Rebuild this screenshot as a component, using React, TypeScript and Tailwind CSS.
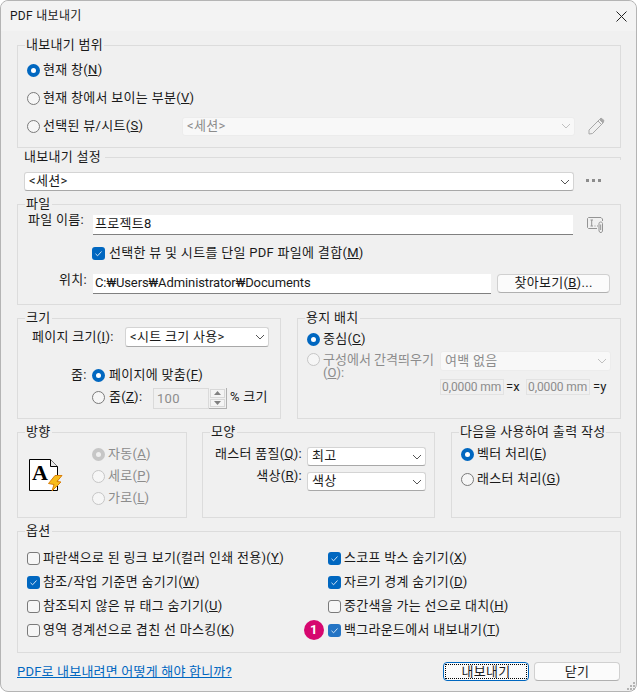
import type { ReactNode } from 'react'

function Group({ title, className, children }: { title: string; className: string; children: ReactNode }) {
  return (
    <div className={`relative border border-[#dcdcdc] ${className}`}>
      <span className="absolute -top-[8px] left-[7px] bg-[#f0f0f0] px-px">{title}</span>
      {children}
    </div>
  )
}

function Radio({ on, disabled }: { on?: boolean; disabled?: boolean }) {
  if (on && disabled) {
    return (
      <span className="flex h-[13px] w-[13px] shrink-0 items-center justify-center rounded-full bg-[#c6c6c6]">
        <span className="h-[5px] w-[5px] rounded-full bg-[#efefef]" />
      </span>
    )
  }
  if (on) {
    return (
      <span className="flex h-[13px] w-[13px] shrink-0 items-center justify-center rounded-full bg-[#0067c0]">
        <span className="h-[5px] w-[5px] rounded-full bg-white" />
      </span>
    )
  }
  return (
    <span
      className={`h-[13px] w-[13px] shrink-0 rounded-full border ${
        disabled ? 'border-[#c6c6c6] bg-[#f6f6f6]' : 'border-[#7a7a7a] bg-[#f6f6f6]'
      }`}
    />
  )
}

function Check({ on, soft }: { on?: boolean; soft?: boolean }) {
  if (!on) return <span className="h-[13px] w-[13px] shrink-0 rounded-[3px] border border-[#7a7a7a] bg-[#f6f6f6]" />
  return (
    <span
      className={`flex h-[13px] w-[13px] shrink-0 items-center justify-center rounded-[3px] ${
        soft ? 'bg-[#2474c4]' : 'bg-[#0067c0]'
      }`}
    >
      <svg width="9" height="9" viewBox="0 0 9 9" fill="none" stroke="#cfe3f5" strokeWidth="1">
        <path d="M1.5 4.8 L3.6 6.8 L7.5 2.5" />
      </svg>
    </span>
  )
}

function Chevron({ disabled }: { disabled?: boolean }) {
  return (
    <svg width="10" height="6" viewBox="0 0 10 6" fill="none" stroke={disabled ? '#c0c0c0' : '#555555'} strokeWidth="1">
      <path d="M1 1 L5 5 L9 1" />
    </svg>
  )
}

function Combo({ text, className, disabled }: { text: string; className: string; disabled?: boolean }) {
  return (
    <div
      className={`flex shrink-0 items-center justify-between rounded-[3px] border pr-[3px] pl-[4px] ${
        disabled
          ? 'border-[#ececec] bg-[#f8f8f8] text-[#8c8c8c]'
          : 'border-[#d4d4d4] border-b-[#a8a8a8] bg-white'
      } ${className}`}
    >
      <span className="-mt-px">{text}</span>
      <Chevron disabled={disabled} />
    </div>
  )
}

function TextInput({ value, className }: { value: string; className: string }) {
  return (
    <div className={`flex h-[20px] shrink-0 items-center border-b border-b-[#808080] bg-white pb-[2px] pl-[2px] ${className}`}>
      {value}
    </div>
  )
}

function PencilIcon() {
  return (
    <svg width="17" height="18" viewBox="0 0 17 18" fill="none" stroke="#a8a8a8" strokeWidth="1">
      <path d="M1 13 L11.5 2.5 L15 6 L4.5 16.5 L1 17 Z" />
      <path d="M11.5 2.5 L13 1 L16 3.5 L15 6" fill="#a8a8a8" />
      <path d="M10 4 L13.5 7.5" />
    </svg>
  )
}

function NameRuleIcon() {
  return (
    <svg width="17" height="16" viewBox="0 0 17 16" fill="none" stroke="#949494" strokeWidth="1">
      <path d="M10 11.5 H1.5 L0.5 10.5 V1.5 L1.5 0.5 H14 L15.5 2 V4" />
      <path d="M3.5 3 H6 M4.7 3 V9 M3.5 9 H6 M7.5 9 H8.5 M10 9 H11" />
      <path d="M12 6.5 C12 4.5 15.5 4.5 15.5 6.5 V14 L14.5 15.5 H13 L12 14 Z" />
      <path d="M13.7 7.5 V13" />
    </svg>
  )
}

function PageIcon() {
  return (
    <svg width="35" height="34" viewBox="0 0 35 34" fill="none">
      <path d="M0.5 0.5 H21.5 L28.5 7.5 V31.5 H0.5 Z" fill="white" stroke="black" />
      <path d="M21.5 0.5 V7.5 H28.5" stroke="black" fill="#e8e8e8" />
      <text x="3" y="21" fontFamily="'Liberation Serif', serif" fontWeight="700" fontSize="22" fill="black">
        A
      </text>
      <path d="M26 16.5 L33 16.5 L28 22.5 L32 23 L23 32 L25 25.5 L19.5 24.5 Z" fill="#f7bc1c" stroke="#d97f0a" />
    </svg>
  )
}

const leftOptions = [
  { on: false, label: '파란색으로 된 링크 보기(컬러 인쇄 전용)(', key: 'Y' },
  { on: true, label: '참조/작업 기준면 숨기기(', key: 'W' },
  { on: false, label: '참조되지 않은 뷰 태그 숨기기(', key: 'U' },
  { on: false, label: '영역 경계선으로 겹친 선 마스킹(', key: 'K' },
]

const rightOptions = [
  { on: true, label: '스코프 박스 숨기기(', key: 'X' },
  { on: true, label: '자르기 경계 숨기기(', key: 'D' },
  { on: false, label: '중간색을 가는 선으로 대치(', key: 'H' },
  { on: true, label: '백그라운드에서 내보내기(', key: 'T', badge: true },
]

export default function App() {
  return (
    <div className="h-[692px] w-[637px] overflow-hidden bg-white font-['Roboto','Noto_Sans_CJK_KR',sans-serif] text-[13px] leading-[14px] tracking-[0.3px] text-[#1a1a1a]">
      <div className="relative flex h-full flex-col rounded-[8px] border border-[#b4b4b4] bg-[#f0f0f0]">
        {/* title bar */}
        <div className="flex h-[30px] shrink-0 items-center justify-between rounded-t-[8px] bg-[#f3f3f3] pr-[9px] pl-[9px] text-[12px]">
          <span>PDF 내보내기</span>
          <svg width="11" height="11" viewBox="0 0 11 11" stroke="#222222" strokeWidth="1">
            <path d="M0.5 0.5 L10.5 10.5 M10.5 0.5 L0.5 10.5" />
          </svg>
        </div>

        <div className="flex w-[620px] flex-col pl-[16px]">
          <Group title="내보내기 범위" className="mt-[14px] h-[103px] pt-[10px] pl-[9px]">
            <div className="flex h-[28px] items-center gap-[3px]">
              <Radio on />
              <span className="-mt-px">
                현재 창(<u>N</u>)
              </span>
            </div>
            <div className="flex h-[28px] items-center gap-[3px]">
              <Radio />
              <span className="-mt-px">
                현재 창에서 보이는 부분(<u>V</u>)
              </span>
            </div>
            <div className="flex h-[28px] items-center">
              <Radio />
              <span className="-mt-px ml-[3px] w-[139px]">
                선택된 뷰/시트(<u>S</u>)
              </span>
              <Combo text="<세션>" disabled className="h-[19px] w-[393px]" />
              <span className="ml-[13px]">
                <PencilIcon />
              </span>
            </div>
          </Group>

          <div className="mt-px flex h-[16px] items-center pl-[7px]">
            <span className="-mt-px mr-[4px]">내보내기 설정</span>
            <div className="mt-[3px] h-[3px] flex-1 border-t border-r border-[#dcdcdc]" />
          </div>
          <div className="mt-[7px] flex items-center pl-[7px]">
            <Combo text="<세션>" className="h-[19px] w-[550px]" />
            <span className="mb-[3px] ml-[12px] flex gap-[3px]">
              <span className="h-[3px] w-[3px] bg-[#8c8c8c]" />
              <span className="h-[3px] w-[3px] bg-[#8c8c8c]" />
              <span className="h-[3px] w-[3px] bg-[#8c8c8c]" />
            </span>
          </div>

          <Group title="파일" className="mt-[13px] h-[101px] pt-[10px] pl-[10px]">
            <div className="flex items-start">
              <span className="-mt-[2px] w-[65px]">파일 이름:</span>
              <TextInput value="프로젝트8" className="w-[480px]" />
              <span className="mt-[2px] ml-[14px]">
                <NameRuleIcon />
              </span>
            </div>
            <div className="mt-[12px] ml-[64px] flex h-[13px] items-center gap-[4px]">
              <Check on />
              <span className="-mt-px">
                선택한 뷰 및 시트를 단일 PDF 파일에 결합(<u>M</u>)
              </span>
            </div>
            <div className="mt-[14px] flex items-start">
              <span className="-mt-px w-[65px] pl-[31px]">위치:</span>
              <TextInput value="C:₩Users₩Administrator₩Documents" className="w-[398px] tracking-[-0.1px]" />
              <button className="ml-[6px] h-[19px] w-[113px] rounded-[4px] border border-[#d0d0d0] border-b-[#b0b0b0] bg-[#fbfbfb] pb-px text-center">
                찾아보기(<u>B</u>)...
              </button>
            </div>
          </Group>

          <div className="mt-[13px] flex gap-[16px]">
            <Group title="크기" className="h-[101px] w-[264px] pt-[8px] pl-[14px]">
              <div className="flex items-center">
                <span className="-mt-px w-[93px]">
                  페이지 크기(<u>I</u>):
                </span>
                <Combo text="<시트 크기 사용>" className="h-[20px] w-[144px]" />
              </div>
              <div className="mt-[18px] -ml-[14px] flex h-[20px] items-center pl-[53px]">
                <span className="-mt-px w-[21px]">줌:</span>
                <Radio on />
                <span className="-mt-px ml-[4px]">
                  페이지에 맞춤(<u>F</u>)
                </span>
              </div>
              <div className="mt-[3px] -ml-[14px] flex h-[21px] items-center pl-[74px]">
                <span className="mb-[2px] flex items-center gap-[4px]">
                  <Radio />
                  <span className="-mt-px w-[44px]">
                    줌(<u>Z</u>):
                  </span>
                </span>
                <div className="flex h-[21px] w-[56px] items-center border border-[#dadada] pl-[3px] text-[#8c8c8c]">100</div>
                <div className="flex h-[21px] w-[18px] flex-col gap-px border-r border-b border-[#b0b0b0] p-px">
                  <span className="flex flex-1 items-center justify-center border border-[#d8d8d8] bg-[#f4f4f4]">
                    <svg width="7" height="4" viewBox="0 0 7 4" fill="#808080">
                      <path d="M3.5 0 L7 4 H0 Z" />
                    </svg>
                  </span>
                  <span className="flex flex-1 items-center justify-center border border-[#d8d8d8] bg-[#f4f4f4]">
                    <svg width="7" height="4" viewBox="0 0 7 4" fill="#808080">
                      <path d="M0 0 H7 L3.5 4 Z" />
                    </svg>
                  </span>
                </div>
                <span className="mb-[3px] ml-[3px]">% 크기</span>
              </div>
            </Group>

            <Group title="용지 배치" className="h-[101px] w-[324px] pt-[13px] pl-[9px]">
              <div className="flex h-[14px] items-center gap-[3px]">
                <Radio on />
                <span className="-mt-px">
                  중심(<u>C</u>)
                </span>
              </div>
              <div className="mt-[5px] flex items-start">
                <div className="flex w-[133px] items-start gap-[3px] pt-[2px] tracking-normal text-[#8c8c8c]">
                  <Radio disabled />
                  <span className="leading-[13px] whitespace-nowrap">
                    구성에서 간격띄우기
                    <br />
                    (<u>O</u>):
                  </span>
                </div>
                <div className="flex flex-col">
                  <Combo text="여백 없음" disabled className="h-[20px] w-[171px]" />
                  <div className="mt-[8px] flex items-center">
                    <div className="flex h-[16px] w-[64px] items-center border border-[#e2e2e2] pl-px text-[12px] tracking-[-0.1px] whitespace-nowrap text-[#8c8c8c]">
                      0,0000 mm
                    </div>
                    <span className="ml-[2px] w-[20px] tracking-normal">=x</span>
                    <div className="flex h-[16px] w-[64px] items-center border border-[#e2e2e2] pl-px text-[12px] tracking-[-0.1px] whitespace-nowrap text-[#8c8c8c]">
                      0,0000 mm
                    </div>
                    <span className="ml-[3px] tracking-normal">=y</span>
                  </div>
                </div>
              </div>
            </Group>
          </div>

          <div className="mt-[13px] flex">
            <Group title="방향" className="flex h-[86px] w-[170px] pl-[11px]">
              <span className="mt-[26px]">
                <PageIcon />
              </span>
              <div className="mt-[10px] ml-[28px] flex flex-col text-[#8c8c8c]">
                <div className="flex h-[22px] items-center gap-[3px]">
                  <Radio on disabled />
                  <span className="-mt-px">
                    자동(<u>A</u>)
                  </span>
                </div>
                <div className="flex h-[22px] items-center gap-[3px]">
                  <Radio disabled />
                  <span className="-mt-px">
                    세로(<u>P</u>)
                  </span>
                </div>
                <div className="flex h-[22px] items-center gap-[3px]">
                  <Radio disabled />
                  <span className="-mt-px">
                    가로(<u>L</u>)
                  </span>
                </div>
              </div>
            </Group>

            <Group title="모양" className="ml-[15px] h-[86px] w-[233px] pt-[14px]">
              <div className="flex items-start">
                <span className="w-[104px] pr-[5px] text-right">
                  래스터 품질(<u>Q</u>):
                </span>
                <Combo text="최고" className="h-[19px] w-[119px]" />
              </div>
              <div className="mt-[6px] flex items-start">
                <span className="-mt-[3px] w-[104px] pr-[5px] text-right">
                  색상(<u>R</u>):
                </span>
                <Combo text="색상" className="h-[19px] w-[119px]" />
              </div>
            </Group>

            <Group title="다음을 사용하여 출력 작성" className="ml-[16px] h-[86px] w-[170px] pt-[11px] pl-[9px]">
              <div className="flex h-[20px] items-center gap-[3px]">
                <Radio on />
                <span className="-mt-px">
                  벡터 처리(<u>E</u>)
                </span>
              </div>
              <div className="mt-[5px] flex h-[20px] items-center gap-[3px]">
                <Radio />
                <span className="-mt-px">
                  래스터 처리(<u>G</u>)
                </span>
              </div>
            </Group>
          </div>

          <Group title="옵션" className="mt-[13px] h-[122px] pt-[14px] pl-[9px]">
            <div className="grid grid-cols-[301px_1fr]">
              {leftOptions.map((left, i) => {
                const right = rightOptions[i]
                return [
                  <div key={left.key} className="flex h-[24px] items-center gap-[3px]">
                    <Check on={left.on} />
                    <span className="-mt-px">
                      {left.label}
                      <u>{left.key}</u>)
                    </span>
                  </div>,
                  <div key={right.key} className="relative flex h-[24px] items-center gap-[3px]">
                    {right.badge && (
                      <span className="absolute top-[2px] -left-[24px] flex h-[20px] w-[20px] items-center justify-center rounded-full bg-[#d6076f] text-[13px] font-bold text-white">
                        1
                      </span>
                    )}
                    <Check on={right.on} soft={right.badge} />
                    <span className="-mt-px">
                      {right.label}
                      <u>{right.key}</u>)
                    </span>
                  </div>,
                ]
              })}
            </div>
          </Group>

          <div className="mt-[9px] flex items-center justify-between pr-px">
            <a className="mt-px tracking-[0.2px] text-[#0067c0] underline">PDF로 내보내려면 어떻게 해야 합니까?</a>
            <div className="flex gap-[5px]">
              <button className="h-[19px] w-[86px] rounded-[4px] border border-[#0067c0] bg-[#fbfbfb] p-px">
                <span className="flex h-full items-center justify-center border border-dotted border-black">내보내기</span>
              </button>
              <button className="h-[19px] w-[86px] rounded-[4px] border border-[#d0d0d0] border-b-[#b0b0b0] bg-[#fbfbfb]">
                닫기
              </button>
            </div>
          </div>
        </div>

        {/* resize grip */}
        <svg className="absolute right-[1px] bottom-[1px]" width="8" height="8" viewBox="0 0 8 8" fill="#b4b4b4">
          <path d="M6 0 h2 v2 h-2 Z M3 3 h2 v2 h-2 Z M6 3 h2 v2 h-2 Z M0 6 h2 v2 h-2 Z M3 6 h2 v2 h-2 Z M6 6 h2 v2 h-2 Z" />
        </svg>
      </div>
    </div>
  )
}
